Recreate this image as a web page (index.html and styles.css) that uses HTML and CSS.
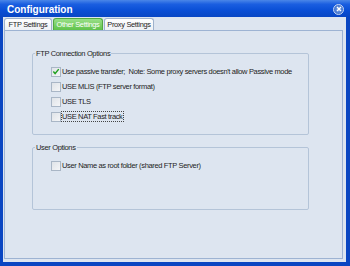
FILE: index.html
```html
<!DOCTYPE html>
<html lang="en">
<head>
    <meta charset="UTF-8">
    <title>Configuration</title>
    <link rel="stylesheet" href="styles.css">
</head>
<body>
    <div class="window">
        <div class="titlebar">
            <span class="title">Configuration</span>
            <span class="close">
                <svg width="6" height="6" viewBox="0 0 6 6"><path d="M1 1L5 5M5 1L1 5" stroke="#fff" stroke-width="1.4"/></svg>
            </span>
        </div>
        <div class="client">
            <div class="tabs">
                <div class="tab">FTP Settings</div>
                <div class="tab green">Other Settings</div>
                <div class="tab">Proxy Settings</div>
            </div>
            <div class="panel">
                <fieldset class="group first">
                    <legend>FTP Connection Options</legend>
                    <div class="row">
                        <span class="check on">
                            <svg width="9" height="9" viewBox="0 0 9 9"><path d="M1.5 4.5L3.5 6.8L7.6 1.8" fill="none" stroke="#21a121" stroke-width="1.6"/></svg>
                        </span>
                        <span>Use passive transfer;&nbsp; Note: Some proxy servers doesn't allow Passive mode</span>
                    </div>
                    <div class="row"><span class="check"></span><span>USE MLIS (FTP server format)</span></div>
                    <div class="row"><span class="check"></span><span>USE TLS</span></div>
                    <div class="row"><span class="check"></span><span class="focus">USE NAT Fast track</span></div>
                </fieldset>
                <fieldset class="group second">
                    <legend>User Options</legend>
                    <div class="row"><span class="check"></span><span>User Name as root folder (shared FTP Server)</span></div>
                </fieldset>
            </div>
        </div>
    </div>
</body>
</html>
```
FILE: styles.css
```css
body {
    margin: 0;
    font-family: "Liberation Sans", Arial, sans-serif;
    font-size: 7.5px;
    letter-spacing: -0.35px;
    color: #1d1d1d;
}

.window {
    width: 350px;
    height: 266px;
    box-sizing: border-box;
    background: #0a46c2;
    padding: 0 4px 4px 3px;
    display: flex;
    flex-direction: column;
}

.titlebar {
    height: 17px;
    margin: 0 -4px 0 -3px;
    padding: 1px 6px 0 7px;
    box-sizing: border-box;
    display: flex;
    align-items: center;
    justify-content: space-between;
    background: linear-gradient(#4a86e8 0%, #1a5ee0 25%, #0a4fd6 60%, #0846c4 100%);
}

.title {
    color: #fff;
    font-weight: bold;
    font-size: 10px;
    letter-spacing: 0;
}

.close {
    width: 9px;
    height: 9px;
    border-radius: 50%;
    background: radial-gradient(#6f9de8, #2f62c4);
    border: 1px solid #c8d8f4;
    display: flex;
    align-items: center;
    justify-content: center;
}

.client {
    flex: 1;
    background: #dde5f0;
    display: flex;
    flex-direction: column;
    padding-left: 1px;
    padding-right: 3px;
    padding-bottom: 3px;
}

.tabs {
    display: flex;
    height: 13px;
    gap: 1px;
}

.tab {
    width: 48px;
    height: 12px;
    margin-top: 1px;
    box-sizing: border-box;
    text-align: center;
    white-space: nowrap;
    background: linear-gradient(#ffffff, #eef1f5);
    border: 1px solid #9fb2cc;
    border-bottom: none;
    border-radius: 3px 3px 0 0;
    line-height: 11px;
    font-size: 7.4px;
    letter-spacing: -0.3px;
}

.tab.green {
    width: 50px;
    background: linear-gradient(#9ae088, #5fc24a);
    color: #fff;
    border-color: #52a843;
}

.tab:last-child {
    width: 50px;
}

.panel {
    flex: 1;
    border: 1px solid #9db3d3;
    background: #dde5f0;
    padding: 18px 33px 0 27px;
}

.group {
    margin: 0;
    padding: 6px 0 0 0;
    border: 1px solid #b4c4d8;
    border-radius: 2px;
    box-sizing: border-box;
}

.group legend {
    padding: 0 1px;
    margin-left: 2px;
}

.group.first {
    height: 86px;
}

.group.second {
    margin-top: 8px;
    height: 67px;
}

.row {
    display: flex;
    align-items: center;
    height: 15px;
    gap: 1px;
    padding-left: 18px;
    white-space: nowrap;
}

.check {
    flex: none;
    width: 8px;
    height: 8px;
    border: 1px solid #a9b6c6;
    background: linear-gradient(135deg, #dfe3e8, #f4f5f7);
    display: flex;
    align-items: center;
    justify-content: center;
}

.check svg {
    display: block;
}

.focus {
    outline: 1px dotted #444;
}
```
